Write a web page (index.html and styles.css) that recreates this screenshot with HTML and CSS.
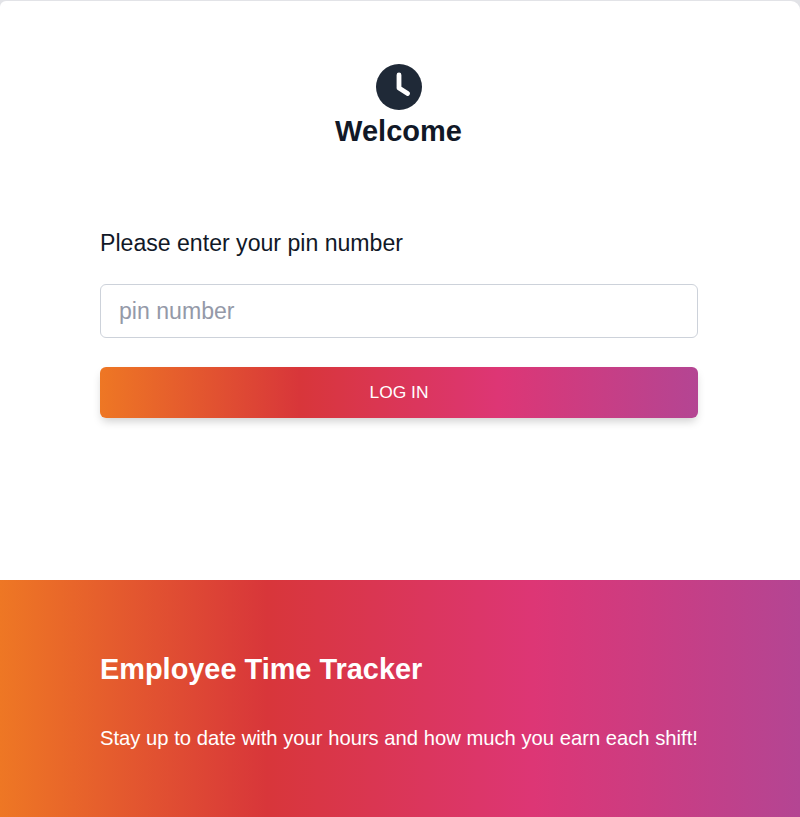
FILE: index.html
```html
<!DOCTYPE html>
<html lang="en">
<head>
<meta charset="utf-8">
<title>Employee Time Tracker</title>
<link rel="stylesheet" href="styles.css">
</head>
<body>
<main class="card">
  <section class="login">
    <header class="brand">
      <svg class="clock" viewBox="0 0 46 46" aria-hidden="true">
        <circle cx="23" cy="23" r="23" fill="#1f2937"/>
        <path d="M23 11v13l8.6 5.5" fill="none" stroke="#fff" stroke-width="4.8" stroke-linecap="round" stroke-linejoin="round"/>
      </svg>
      <h1 class="title">Welcome</h1>
    </header>
    <form class="form">
      <label class="label" for="pin">Please enter your pin number</label>
      <input class="pin" id="pin" type="text" placeholder="pin number">
      <button class="submit" type="button">LOG IN</button>
    </form>
  </section>
  <section class="promo">
    <h2 class="promo-title">Employee Time Tracker</h2>
    <p class="promo-text">Stay up to date with your hours and how much you earn each shift!</p>
  </section>
</main>
</body>
</html>
```
FILE: styles.css
```css
* { box-sizing: border-box; margin: 0; }
body { background: #e2e3e7; font-family: "Liberation Sans", Arial, sans-serif; color: #111827; }
.card { display: flex; flex-direction: column; height: 817px; padding-top: 1px; overflow: hidden; }
.login { height: 579px; padding: 62.5px 102px 0 100px; background: #fff; border-radius: 6px 9px 0 0; }
.brand { display: flex; flex-direction: column; align-items: center; }
.clock { display: block; width: 46px; height: 46px; }
.title { margin-top: 3.5px; margin-right: 1px; font-size: 29px; line-height: 36px; }
.form { display: flex; flex-direction: column; margin-top: 76px; }
.label { font-size: 23.1px; line-height: 36px; }
.pin { height: 54px; margin-top: 23px; padding: 0 18px; border: 1px solid #cdd2da; border-radius: 6px; font: inherit; font-size: 23.1px; background: #fff; }
.pin::placeholder { color: #9499a8; opacity: 1; }
.submit, .promo { background: linear-gradient(to right, #ee7724, #d8363a, #dd3675, #b44593); color: #fff; }
.submit { height: 51px; margin-top: 29px; border: 0; border-radius: 6px; font: inherit; font-size: 17.4px; box-shadow: 0 5px 10px -2px rgba(0, 0, 0, 0.2); }
.promo { flex: 1; padding: 71px 100px 0; }
.promo-title { font-size: 28.9px; line-height: 36px; }
.promo-text { margin-top: 35px; font-size: 20.23px; line-height: 32px; white-space: nowrap; }
```
